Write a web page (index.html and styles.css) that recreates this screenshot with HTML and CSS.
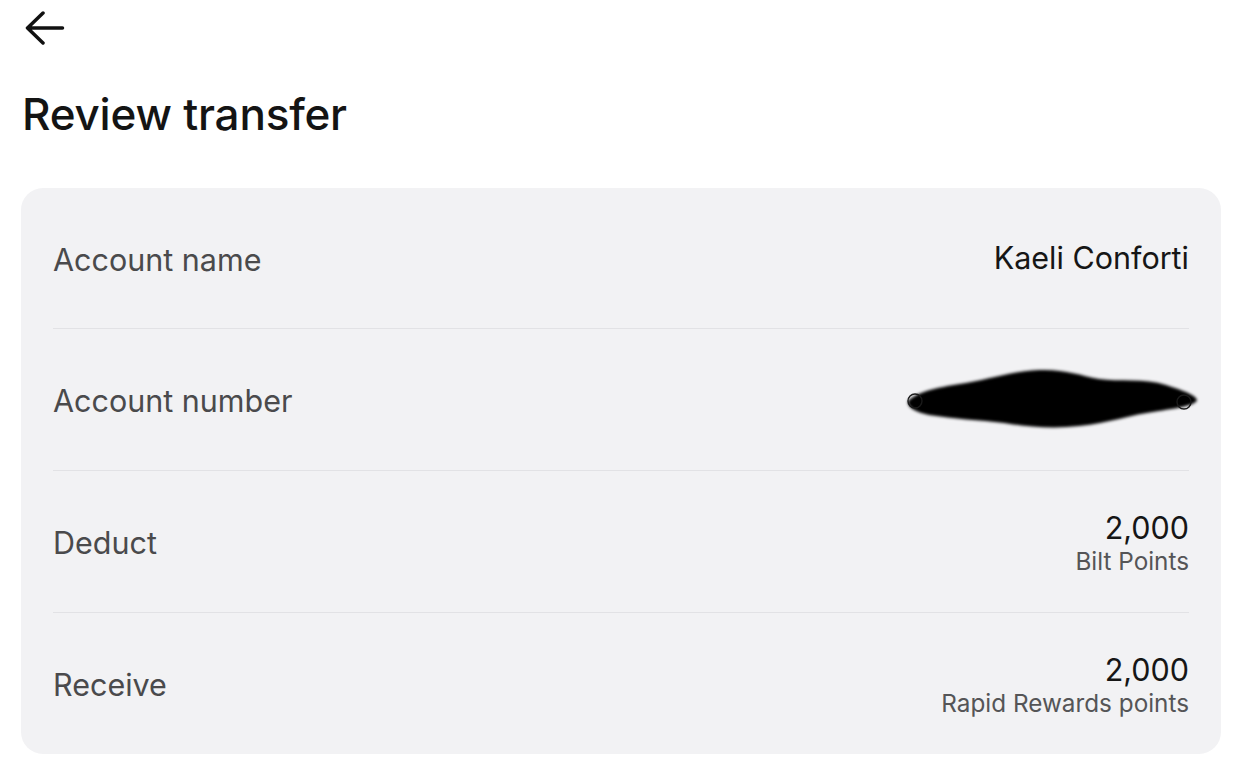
FILE: index.html
```html
<!DOCTYPE html>
<html lang="en">
<head>
<meta charset="utf-8">
<title>Review transfer</title>
<link rel="stylesheet" href="styles.css">
</head>
<body>
  <div class="topbar">
    <svg class="back" width="40" height="34" viewBox="0 0 40 34" aria-label="Back">
      <path d="M18 2 L2.5 17 L18 32 M2.5 17 H37.5" fill="none" stroke="#111" stroke-width="3.5" stroke-linecap="round" stroke-linejoin="round"/>
    </svg>
  </div>
  <h1 class="title">Review transfer</h1>
  <div class="card">
    <div class="row">
      <div class="label">Account name</div>
      <div class="value">Kaeli Conforti</div>
    </div>
    <div class="row">
      <div class="label">Account number</div>
      <svg class="redact" width="296" height="66" viewBox="0 0 296 66" aria-hidden="true">
        <defs>
          <filter id="soft" x="-5%" y="-20%" width="110%" height="140%">
            <feGaussianBlur stdDeviation="1.4"/>
          </filter>
        </defs>
        <g filter="url(#soft)">
          <path d="M4 36 C 14 26, 36 22, 62 18 C 90 13, 110 6, 135 5 C 160 4, 175 10, 195 14 C 215 17, 240 13, 262 20 C 278 25, 292 30, 293 35 C 292 40, 275 43, 255 46 C 225 50, 205 58, 175 61 C 150 64, 125 62, 100 58 C 75 55, 50 54, 25 50 C 10 47, 3 42, 4 36 Z" fill="#050505"/>
        </g>
        <circle cx="11" cy="36" r="7" fill="none" stroke="#1a1a1a" stroke-width="1.4"/>
        <circle cx="280" cy="37" r="7" fill="none" stroke="#1a1a1a" stroke-width="1.4"/>
      </svg>
    </div>
    <div class="row">
      <div class="label">Deduct</div>
      <div class="stack">
        <div class="value">2,000</div>
        <div class="sub">Bilt Points</div>
      </div>
    </div>
    <div class="row">
      <div class="label">Receive</div>
      <div class="stack">
        <div class="value">2,000</div>
        <div class="sub">Rapid Rewards points</div>
      </div>
    </div>
  </div>
</body>
</html>
```

FILE: styles.css
```css
* {
  box-sizing: border-box;
}

body {
  margin: 0;
  background: #ffffff;
  font-family: Inter, "Noto Sans", "Liberation Sans", sans-serif;
  color: #111111;
}

.topbar {
  padding: 11px 0 0 25px;
  height: 45px;
}

.back {
  display: block;
}

.title {
  margin: 42px 0 47px 22px;
  font-size: 44px;
  line-height: 54px;
  font-weight: 500;
  letter-spacing: -0.2px;
  color: #141414;
}

.card {
  margin: 0 23px 0 21px;
  background: #f2f2f4;
  border-radius: 22px;
  padding: 0 32px;
}

.row {
  height: 142px;
  border-top: 1px solid #e2e2e5;
  display: flex;
  align-items: center;
  justify-content: space-between;
}

.row:first-child {
  height: 140px;
  border-top: none;
}

.label {
  font-size: 30.5px;
  color: #4a4a4c;
  padding-top: 2px;
}

.value {
  font-size: 30.5px;
  color: #161616;
  line-height: 36px;
}

.stack {
  display: flex;
  flex-direction: column;
  align-items: flex-end;
  padding-top: 3px;
}

.sub {
  font-size: 24.3px;
  line-height: 30px;
  color: #555557;
}

.redact {
  display: block;
  margin-right: -11px;
  margin-top: -4px;
}
```
